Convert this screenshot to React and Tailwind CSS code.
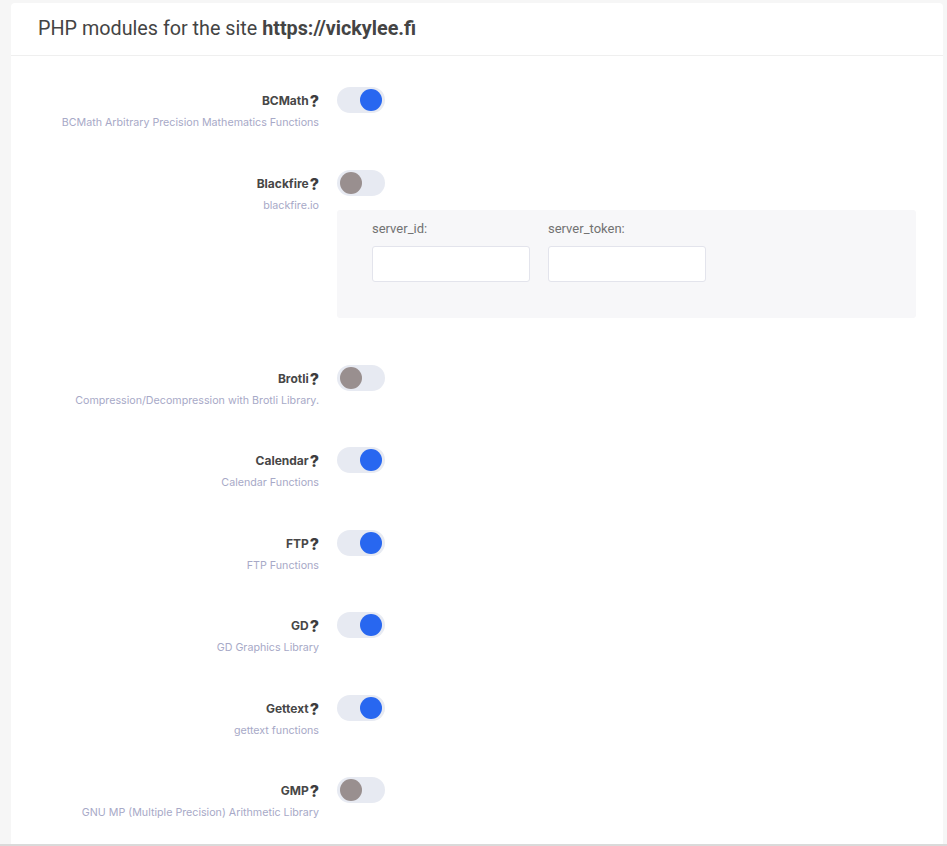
import { useState } from "react";

const modules = [
  { name: "BCMath", desc: "BCMath Arbitrary Precision Mathematics Functions", on: true },
  { name: "Blackfire", desc: "blackfire.io", on: false, fields: ["server_id:", "server_token:"] },
  { name: "Brotli", desc: "Compression/Decompression with Brotli Library.", on: false },
  { name: "Calendar", desc: "Calendar Functions", on: true },
  { name: "FTP", desc: "FTP Functions", on: true },
  { name: "GD", desc: "GD Graphics Library", on: true },
  { name: "Gettext", desc: "gettext functions", on: true },
  { name: "GMP", desc: "GNU MP (Multiple Precision) Arithmetic Library", on: false },
];

function Toggle({ on, onClick }) {
  return (
    <button
      onClick={onClick}
      className={`w-[48px] h-[26px] rounded-full bg-[#e7eaf2] flex items-center px-[3px] shrink-0 ${
        on ? "justify-end" : "justify-start"
      }`}
    >
      <span
        className={`w-[22px] h-[22px] rounded-full ${
          on ? "bg-[#2867f0]" : "bg-[#998f8f]"
        }`}
      />
    </button>
  );
}

function ModuleRow({ mod }) {
  const [on, setOn] = useState(mod.on);

  return (
    <div className={`flex ${mod.fields ? "h-[195px]" : "h-[82.5px]"}`}>
      {/* Label */}
      <div className="w-[308px] shrink-0 text-right pt-[1px]">
        <div className="h-[26px] flex items-center justify-end text-[12px] font-bold text-[#474747] font-['Inter',sans-serif]">
          {mod.name}
          <span className="text-[16px] font-extrabold text-[#3d3d3d] ml-[1px]">?</span>
        </div>
        <p className="text-[10.7px] leading-[18px] text-[#a7a9c7] font-['Inter',sans-serif]">
          {mod.desc}
        </p>
      </div>

      {/* Switch + options */}
      <div className="flex-1 ml-[18px]">
        <Toggle on={on} onClick={() => setOn(!on)} />

        {mod.fields && (
          <div className="mt-[14px] h-[108px] bg-[#f7f7f9] rounded-[3px] pl-[35px] pt-[9px] flex gap-[18px] font-['Roboto',sans-serif]">
            {mod.fields.map((f) => (
              <div key={f}>
                <div className="text-[13px] leading-[20px] text-[#727272] mb-[7px]">{f}</div>
                <input className="w-[158px] h-[36px] bg-white border border-[#e3e4ec] rounded-[3px] outline-none px-2 text-[13px]" />
              </div>
            ))}
          </div>
        )}
      </div>
    </div>
  );
}

export default function App() {
  return (
    <div className="h-[846px] overflow-hidden bg-[#f6f6f6] border-b-2 border-[#dadada] pt-[3px] pl-[11px] pr-[4px]">
      <div className="h-full bg-white rounded-t-[4px]">
        {/* Header */}
        <div className="h-[53px] border-b border-[#efefef] px-[27px] flex items-center pb-[1px]">
          <h1 className="text-[19.75px] text-[#444] font-['Roboto',sans-serif]">
            PHP modules for the site <span className="font-bold">https://vickylee.fi</span>
          </h1>
        </div>

        {/* Modules */}
        <div className="pt-[31px] pr-[27px]">
          {modules.map((m) => (
            <ModuleRow key={m.name} mod={m} />
          ))}
        </div>
      </div>
    </div>
  );
}
